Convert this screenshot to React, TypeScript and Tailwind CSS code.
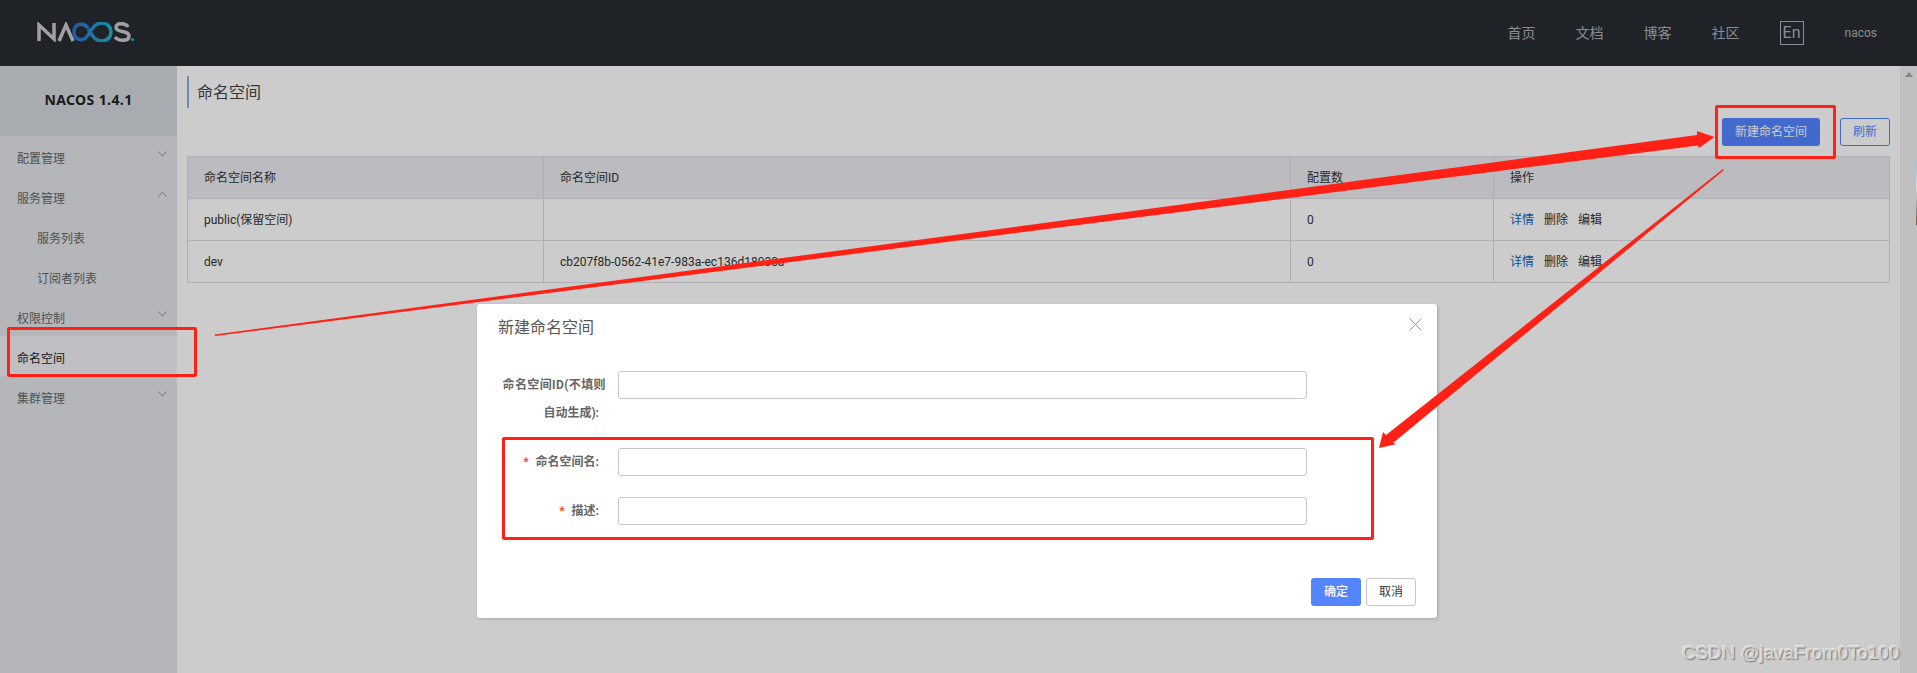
import React from "react";

const font = "font-['Roboto','Noto_Sans_CJK_SC',sans-serif]";

const menu = [
  { label: "配置管理", arrow: "down" },
  { label: "服务管理", arrow: "up" },
  { label: "服务列表", sub: true },
  { label: "订阅者列表", sub: true },
  { label: "权限控制", arrow: "down" },
  { label: "命名空间", active: true },
  { label: "集群管理", arrow: "down" },
];

const rows = [
  { name: "public(保留空间)", id: "", count: 0 },
  { name: "dev", id: "cb207f8b-0562-41e7-983a-ec136d18030a", count: 0 },
];

const Logo = () => (
  <svg width="100" height="20" viewBox="0 0 100 20" fill="none" className="block mb-[2px]">
    <defs>
      <linearGradient id="inf" x1="0" x2="1" y1="0" y2="0">
        <stop offset="0" stopColor="#2f6fd0" />
        <stop offset="1" stopColor="#1cb5d0" />
      </linearGradient>
    </defs>
    <polyline points="2,19 2,3 17,17 17,1" stroke="#c9c9c9" strokeWidth="3.5" />
    <polyline points="22,19 29,3 36,19" stroke="#c9c9c9" strokeWidth="3.5" />
    <path
      d="M51 6 C47 0 37 1 37 10 C37 19 47 20 51 13 C54 9 57 1 65 1 C71 1 74 6 74 10 C74 14 71 19 65 19 C57 19 54 11 51 7"
      stroke="url(#inf)"
      strokeWidth="3.5"
    />
    <path d="M91 5 C89 1 79 0 79 5.5 C79 11 92 8 92 14 C92 20 81 19 78 15" stroke="#c9c9c9" strokeWidth="3.5" />
    <circle cx="95.5" cy="17.5" r="1.6" fill="#1cb5d0" />
  </svg>
);

const Chevron = ({ dir }: { dir: string }) => (
  <svg width="9" height="6" viewBox="0 0 9 6" fill="none" className="-mt-1">
    <polyline
      points={dir === "up" ? "0.5,5.5 4.5,1 8.5,5.5" : "0.5,0.5 4.5,5 8.5,0.5"}
      stroke="#8f9398"
      strokeWidth="1"
    />
  </svg>
);

const Field = ({ label, required }: { label: string; required?: boolean }) => (
  <div className="flex mb-[21px]">
    <label className="w-[120px] pr-[19px] text-right text-xs leading-7 font-bold text-[#666] whitespace-nowrap">
      {required && <span className="text-[#ff4a20] mr-[7px]">*</span>}
      {label}:
    </label>
    <input className="w-[689px] h-7 border border-[#c4c6cf] rounded-[3px] bg-white" />
  </div>
);

export default function App() {
  return (
    <div className={`relative h-[673px] w-[1917px] overflow-hidden flex flex-col bg-white ${font}`}>
      <header className="h-[66px] shrink-0 bg-[#272c33] flex items-center justify-between pl-[37px] pr-10">
        <Logo />
        <nav className="flex items-center text-sm text-[#aeb0b3]">
          <a className="mr-10">首页</a>
          <a className="mr-10">文档</a>
          <a className="mr-10">博客</a>
          <a className="mr-10">社区</a>
          <span className="w-6 h-6 border border-[#aeb0b3] text-base leading-[22px] text-center mr-[41px]">En</span>
          <span className="text-xs">nacos</span>
        </nav>
      </header>

      <div className="flex flex-1 min-h-0">
        <aside className="w-[177px] shrink-0 bg-[#e1e4e8]">
          <div className="h-[70px] bg-[#d3d7dc] flex items-center justify-center pb-[2px] font-['Noto_Sans',sans-serif] text-sm font-bold tracking-[0.4px] text-[#222]">
            NACOS 1.4.1
          </div>
          <ul className="text-xs">
            {menu.map((m) => (
              <li
                key={m.label}
                className={`h-10 flex items-center justify-between pr-[10px] ${m.sub ? "pl-[37px]" : "pl-[17px]"} ${
                  m.active ? "bg-[#f0eff5] text-[#222]" : "text-[#666]"
                }`}
              >
                <span className="pt-[6px]">{m.label}</span>
                {m.arrow && <Chevron dir={m.arrow} />}
              </li>
            ))}
          </ul>
        </aside>

        <main className="flex-1 pl-[10px] pr-[10px] pt-[10px] bg-white text-xs text-[#333]">
          <h1 className="h-8 border-l-2 border-[#88aedb] pl-2 text-base leading-[34px] text-[#444]">命名空间</h1>
          <div className="flex justify-end gap-5 mt-[10px] h-7">
            <button className="w-[98px] h-7 rounded-[3px] bg-[#5584ff] text-white">新建命名空间</button>
            <button className="w-[50px] h-7 rounded-[3px] border border-[#5584ff] text-[#5584ff]">刷新</button>
          </div>
          <table className="w-full mt-[10px] border-collapse table-fixed text-left">
            <colgroup>
              <col className="w-[356px]" />
              <col className="w-[747px]" />
              <col className="w-[203px]" />
              <col />
            </colgroup>
            <thead>
              <tr className="h-[42px] bg-[#ebecf0]">
                <th className="font-normal border border-[#dcdde2] pl-4">命名空间名称</th>
                <th className="font-normal border border-[#dcdde2] pl-4">命名空间ID</th>
                <th className="font-normal border border-[#dcdde2] pl-4">配置数</th>
                <th className="font-normal border border-[#dcdde2] pl-4">操作</th>
              </tr>
            </thead>
            <tbody>
              {rows.map((r) => (
                <tr key={r.name} className="h-[42px]">
                  <td className="border border-[#dcdde2] pl-4">{r.name}</td>
                  <td className="border border-[#dcdde2] pl-4">{r.id}</td>
                  <td className="border border-[#dcdde2] pl-4">{r.count}</td>
                  <td className="border border-[#dcdde2] pl-4">
                    <a className="text-[#0b65c5] mr-[10px]">详情</a>
                    <a className="mr-[10px]">删除</a>
                    <a>编辑</a>
                  </td>
                </tr>
              ))}
            </tbody>
          </table>
        </main>

        <div className="w-[17px] shrink-0 bg-[#f1f1f1] flex justify-center pt-[6px]">
          <div className="w-0 h-0 border-x-[4px] border-x-transparent border-b-[5px] border-b-[#a8a8a8]" />
        </div>
      </div>

      {/* dialog mask */}
      <div className="absolute inset-0 bg-black/20" />

      {/* sliver of another window at the right edge */}
      <div className="absolute right-0 top-[162px] w-px h-[63px] bg-[linear-gradient(#8fc4d0,#d8dde0_40%,#6b5a48)]" />

      <div className="absolute left-[477px] top-[304px] w-[960px] h-[314px] bg-white rounded-[3px] shadow-[1px_1px_3px_0px_rgba(0,0,0,0.2)] flex flex-col">
        <div className="pt-[14px] px-[21px] text-base leading-5 text-[#555]">新建命名空间</div>
        <button className="absolute right-[15px] top-[14px]">
          <svg width="13" height="13" viewBox="0 0 13 13" fill="none" className="block">
            <path d="M0.5 0.5 L12.5 12.5 M12.5 0.5 L0.5 12.5" stroke="#999" strokeWidth="1" />
          </svg>
        </button>
        <form className="pt-[33px] pl-[21px]">
          <div className="flex mb-[21px]">
            <label className="w-[120px] pr-[19px] flex flex-col items-end text-xs leading-7 font-bold text-[#666] whitespace-nowrap">
              <span className="-mr-[7px] tracking-[0.4px]">命名空间ID(不填则</span>
              <span>自动生成):</span>
            </label>
            <input className="w-[689px] h-7 border border-[#c4c6cf] rounded-[3px] bg-white" />
          </div>
          <Field label="命名空间名" required />
          <Field label="描述" required />
        </form>
        <div className="mt-auto flex justify-end gap-[5px] pr-[21px] pb-3 text-xs">
          <button className="w-[50px] h-7 rounded-[3px] bg-[#5584ff] text-white font-medium">确定</button>
          <button className="w-[50px] h-7 rounded-[3px] border border-[#c4c6cf] bg-white text-[#333]">取消</button>
        </div>
      </div>

      {/* screenshot annotations */}
      <div className="absolute left-[7px] top-[327px] w-[190px] h-[50px] border-[3px] border-[#ff2116] rounded-[2px]" />
      <div className="absolute left-[1715px] top-[105px] w-[121px] h-[54px] border-[3px] border-[#ff2116] rounded-[2px]" />
      <div className="absolute left-[502px] top-[437px] w-[872px] h-[103px] border-[3px] border-[#ff2116] rounded-[2px]" />
      <svg className="absolute inset-0 pointer-events-none" width="1917" height="673" fill="#ff2116">
        <polygon points="215,334.5 1697,135 1697,131 1714.5,137 1699,148 1698,145.5 215,336" />
        <polygon points="1723,169 1724,170 1393,443 1397,444 1379,448 1383,432 1386,435" />
      </svg>

      <span className="absolute left-[1682px] top-[642px] font-['Liberation_Sans',sans-serif] text-[18.8px] leading-[22px] text-[#d2d2d2] [text-shadow:1px_1px_1px_#7a7a7a,-1px_-1px_0px_#e8e8e8]">
        CSDN @javaFrom0To100
      </span>
    </div>
  );
}
